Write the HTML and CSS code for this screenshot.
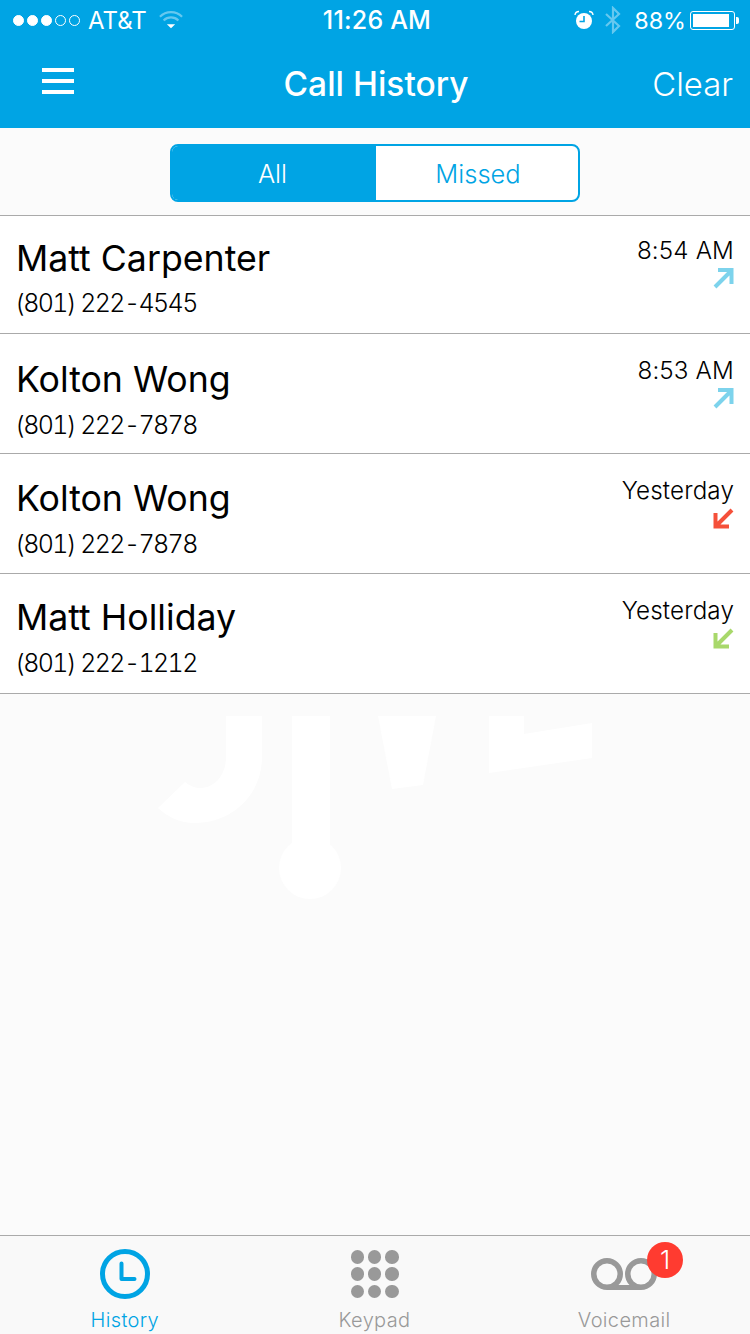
FILE: index.html
```html
<!DOCTYPE html>
<html>
<head>
    <title>Call History</title>
    <meta charset="UTF-8">
    <link rel="stylesheet" href="styles.css">
</head>
<body>
    <div class="screen">
        <div class="top-bar">
            <div class="status-bar">
                <div class="status-left">
                    <div class="signal">
                        <span class="dot on"></span><span class="dot on"></span><span class="dot on"></span><span class="dot"></span><span class="dot"></span>
                    </div>
                    <span class="carrier">AT&amp;T</span>
                    <svg class="wifi" width="24" height="20" viewBox="0 0 26 20">
                        <path d="M1 6.5 A17 17 0 0 1 25 6.5" fill="none" stroke="#fff" stroke-opacity="0.4" stroke-width="2.4"/>
                        <path d="M5 10.5 A11.5 11.5 0 0 1 21 10.5" fill="none" stroke="#fff" stroke-opacity="0.4" stroke-width="2.4"/>
                        <path d="M8.5 14.5 H17.5 L13 19 Z" fill="#fff"/>
                    </svg>
                </div>
                <div class="clock">11:26 AM</div>
                <div class="status-right">
                    <svg class="alarm" width="20" height="20" viewBox="0 0 20 20">
                        <circle cx="10" cy="11" r="8" fill="#fff"/>
                        <path d="M10 6 V11.5 H5.5" fill="none" stroke="#00a4e4" stroke-width="1.6"/>
                        <path d="M1 5 A4 4 0 0 1 5 1.5 M15 1.5 A4 4 0 0 1 19 5" fill="none" stroke="#fff" stroke-width="1.4"/>
                    </svg>
                    <svg class="bluetooth" width="16" height="28" viewBox="0 0 16 28">
                        <path d="M1 8 L14 20 L8 26 V2 L14 8 L1 20" fill="none" stroke="#fff" stroke-opacity="0.4" stroke-width="2.2"/>
                    </svg>
                    <span class="battery-text">88%</span>
                    <div class="battery"><div class="battery-fill"></div></div>
                    <div class="battery-tip"></div>
                </div>
            </div>
            <div class="nav-bar">
                <div class="menu-icon"><span></span><span></span><span></span></div>
                <h1 class="nav-title">Call History</h1>
                <a class="nav-clear">Clear</a>
            </div>
        </div>

        <div class="filter">
            <div class="segment">
                <div class="segment-item active">All</div>
                <div class="segment-item">Missed</div>
            </div>
        </div>

        <div class="calls">
            <div class="call-row row-one">
                <div class="call-info">
                    <div class="call-name">Matt Carpenter</div>
                    <div class="call-number">(801) 222-4545</div>
                </div>
                <div class="call-meta">
                    <div class="call-time">8:54 AM</div>
                    <svg class="arrow" width="21" height="21" viewBox="0 0 21 21"><path d="M2 19 L18 3 M5 2 H18.5 V16" fill="none" stroke="#7dd3ec" stroke-width="4"/></svg>
                </div>
            </div>
            <div class="call-row row-two">
                <div class="call-info">
                    <div class="call-name">Kolton Wong</div>
                    <div class="call-number">(801) 222-7878</div>
                </div>
                <div class="call-meta">
                    <div class="call-time">8:53 AM</div>
                    <svg class="arrow" width="21" height="21" viewBox="0 0 21 21"><path d="M2 19 L18 3 M5 2 H18.5 V16" fill="none" stroke="#7dd3ec" stroke-width="4"/></svg>
                </div>
            </div>
            <div class="call-row row-three">
                <div class="call-info">
                    <div class="call-name">Kolton Wong</div>
                    <div class="call-number">(801) 222-7878</div>
                </div>
                <div class="call-meta">
                    <div class="call-time">Yesterday</div>
                    <svg class="arrow" width="21" height="21" viewBox="0 0 21 21"><path d="M19 2 L3 18 M2.5 5 V18.5 H16" fill="none" stroke="#f5503a" stroke-width="4"/></svg>
                </div>
            </div>
            <div class="call-row row-four">
                <div class="call-info">
                    <div class="call-name">Matt Holliday</div>
                    <div class="call-number">(801) 222-1212</div>
                </div>
                <div class="call-meta">
                    <div class="call-time">Yesterday</div>
                    <svg class="arrow" width="21" height="21" viewBox="0 0 21 21"><path d="M19 2 L3 18 M2.5 5 V18.5 H16" fill="none" stroke="#a8d86b" stroke-width="4"/></svg>
                </div>
            </div>
        </div>

        <div class="empty">
            <svg class="watermark" width="436" height="184" viewBox="158 716 436 184">
                <path d="M226 716 H262 V757 C262 795 232 823 195 823 C180 823 168 817 158 808 L185 782 C190 786 195 788 200 788 C215 788 226 775 226 757 Z" fill="#fff"/>
                <rect x="292" y="716" width="38" height="135" fill="#fff"/>
                <circle cx="310" cy="868" r="31" fill="#fff"/>
                <polygon points="378,716 436,716 423,785 392,789" fill="#fff"/>
                <polygon points="489,716 524,716 524,734 592,723 592,758 489,773" fill="#fff"/>
            </svg>
        </div>

        <div class="tab-bar">
            <div class="tab active">
                <svg class="tab-icon" width="50" height="50" viewBox="0 0 50 50">
                    <circle cx="25" cy="25" r="22.5" fill="none" stroke="#00a4e4" stroke-width="5"/>
                    <path d="M21.5 14.5 V30 H34.5" fill="none" stroke="#00a4e4" stroke-width="4" stroke-linecap="round" stroke-linejoin="round"/>
                </svg>
                <span class="tab-label">History</span>
            </div>
            <div class="tab">
                <div class="keypad">
                    <span></span><span></span><span></span>
                    <span></span><span></span><span></span>
                    <span></span><span></span><span></span>
                </div>
                <span class="tab-label">Keypad</span>
            </div>
            <div class="tab">
                <div class="voicemail">
                    <svg width="66" height="50" viewBox="0 0 66 50">
                        <path d="M16 38.5 H50" fill="none" stroke="#999" stroke-width="5"/>
                        <circle cx="16" cy="25" r="13.25" fill="none" stroke="#999" stroke-width="5.5"/>
                        <circle cx="50" cy="25" r="13.25" fill="none" stroke="#999" stroke-width="5.5"/>
                    </svg>
                    <span class="badge">1</span>
                </div>
                <span class="tab-label">Voicemail</span>
            </div>
        </div>
    </div>
</body>
</html>
```

FILE: styles.css
```css
html, body {
    margin: 0;
    padding: 0;
}
body {
    font-family: Inter, "Liberation Sans", sans-serif;
    background-color: #fbfbfb;
    color: #000;
}
.screen {
    position: relative;
    width: 750px;
    height: 1334px;
    display: flex;
    flex-direction: column;
    overflow: hidden;
}
.top-bar {
    background-color: #00a4e4;
    color: #fff;
    height: 128px;
}
.status-bar {
    height: 40px;
    display: flex;
    align-items: center;
    justify-content: space-between;
    padding: 0 11px 0 13px;
    position: relative;
    font-size: 24px;
}
.status-left, .status-right {
    display: flex;
    align-items: center;
}
.signal {
    display: flex;
    gap: 3px;
    margin-right: 8px;
}
.dot {
    width: 11px;
    height: 11px;
    box-sizing: border-box;
    border-radius: 50%;
    border: 1px solid #fff;
}
.dot.on {
    background-color: #fff;
}
.carrier {
    font-weight: 400;
}
.wifi {
    margin-left: 12px;
}
.clock {
    position: absolute;
    left: 0;
    right: 0;
    padding-left: 4px;
    text-align: center;
    font-size: 25px;
    font-weight: 500;
    letter-spacing: 0.2px;
}
.alarm {
    margin-right: 11px;
}
.bluetooth {
    margin-right: 13px;
}
.battery-text {
    font-size: 23.3px;
    margin-right: 4px;
}
.battery {
    width: 45px;
    height: 19px;
    box-sizing: border-box;
    border: 1px solid #fff;
    border-radius: 3px;
    padding: 2px;
}
.battery-fill {
    width: 36px;
    height: 100%;
    background-color: #fff;
}
.battery-tip {
    width: 3px;
    height: 7px;
    margin-left: 1px;
    background-color: #fff;
    border-radius: 0 2px 2px 0;
}
.nav-bar {
    height: 88px;
    position: relative;
    display: flex;
    align-items: center;
    justify-content: space-between;
    padding: 0 17px 0 42px;
}
.menu-icon {
    width: 32px;
    display: flex;
    flex-direction: column;
    gap: 7px;
    margin-top: -6px;
}
.menu-icon span {
    display: block;
    height: 4px;
    background-color: #fff;
}
.nav-title {
    position: absolute;
    left: 0;
    right: 0;
    margin: 0;
    padding-left: 2px;
    text-align: center;
    font-size: 33.5px;
    font-weight: 500;
}
.nav-clear {
    font-size: 32.8px;
    font-weight: 300;
}
.filter {
    height: 88px;
    box-sizing: border-box;
    padding-top: 16px;
    display: flex;
    justify-content: center;
    background-color: #fbfbfb;
    border-bottom: 1px solid #aaa;
}
.segment {
    width: 410px;
    height: 58px;
    box-sizing: border-box;
    border: 2px solid #00a4e4;
    border-radius: 8px;
    background-color: #fff;
    display: flex;
    overflow: hidden;
}
.segment-item {
    flex: 1;
    display: flex;
    align-items: center;
    justify-content: center;
    font-size: 25.5px;
    font-weight: 300;
    color: #00a4e4;
    padding-left: 2px;
}
.segment-item.active {
    flex: none;
    width: 204px;
    background-color: #00a4e4;
    color: #fff;
    padding: 0 3px 0 0;
    box-sizing: border-box;
}
.calls {
    background-color: #fff;
}
.call-row {
    box-sizing: border-box;
    display: flex;
    justify-content: space-between;
    padding: 0 16px;
    border-bottom: 1px solid #aaa;
    height: 120px;
}
.row-one {
    height: 118px;
}
.call-info {
    padding-top: 19px;
}
.row-two .call-info {
    padding-top: 22px;
}
.row-three .call-info {
    padding-top: 21px;
}
.row-four .call-info {
    padding-top: 20px;
}
.call-name {
    font-size: 35.7px;
    font-weight: 400;
    line-height: 46px;
}
.call-number {
    font-size: 25px;
    font-weight: 300;
    line-height: 36px;
    margin-top: 5px;
    margin-left: -1px;
    font-variant-numeric: tabular-nums;
    letter-spacing: -1.6px;
}
.row-one .call-number {
    margin-top: 4px;
}
.call-meta {
    padding-top: 21px;
    display: flex;
    flex-direction: column;
    align-items: flex-end;
}
.row-one .call-meta {
    padding-top: 19px;
}
.call-time {
    font-size: 24.2px;
    font-weight: 300;
    line-height: 32px;
    letter-spacing: 0.15px;
}
.arrow {
    display: block;
    margin-top: 1px;
}
.empty {
    flex: 1;
}
.watermark {
    position: absolute;
    left: 158px;
    top: 716px;
}
.tab-bar {
    height: 99px;
    box-sizing: border-box;
    border-top: 1px solid #aaa;
    background-color: #f9f9f9;
    display: flex;
    padding-right: 1px;
}
.tab {
    flex: 1;
    display: flex;
    flex-direction: column;
    align-items: center;
    color: #999;
    padding-top: 13px;
}
.tab.active {
    color: #00a4e4;
}
.tab-icon {
    display: block;
}
.tab-label {
    font-size: 20px;
    font-weight: 300;
    letter-spacing: 0.35px;
    margin-top: 9px;
}
.keypad {
    width: 48px;
    height: 49px;
    margin-top: 1px;
    display: grid;
    grid-template-columns: repeat(3, 13.5px);
    grid-auto-rows: 13.5px;
    gap: 3.75px;
}
.keypad span {
    background-color: #999;
    border-radius: 50%;
}
.voicemail {
    position: relative;
    height: 50px;
}
.voicemail svg {
    display: block;
}
.badge {
    position: absolute;
    top: -7px;
    right: -26px;
    width: 36px;
    height: 36px;
    border-radius: 50%;
    background-color: #ff3b30;
    color: #fff;
    font-size: 26px;
    font-weight: 300;
    line-height: 36px;
    text-align: center;
}
```
